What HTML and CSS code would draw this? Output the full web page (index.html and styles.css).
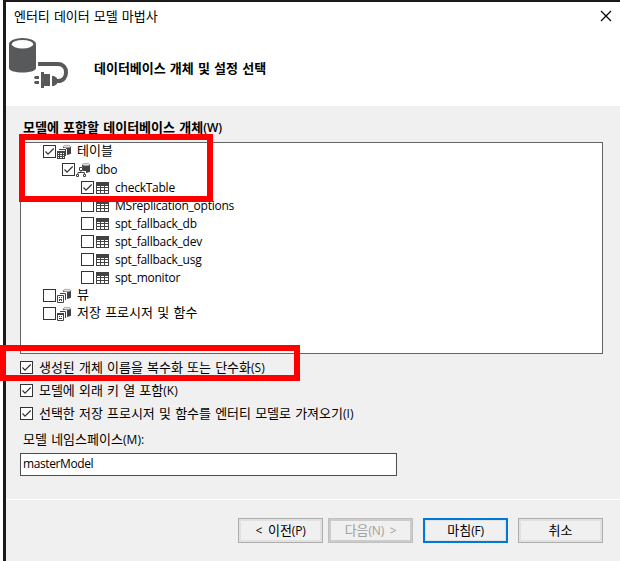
FILE: index.html
```html
<!DOCTYPE html>
<html lang="ko">
<head>
<meta charset="utf-8">
<title>엔터티 데이터 모델 마법사</title>
<link rel="stylesheet" href="styles.css">
</head>
<body>
<svg class="defs" width="0" height="0">
  <symbol id="check" viewBox="0 0 13 13"><rect x=".5" y=".5" width="12" height="12" fill="#fff" stroke="#333"/><path d="M2.500 6.500 5 9.200 10.700 3.500" fill="none" stroke="#333" stroke-width="1.2"/></symbol>
  <symbol id="box" viewBox="0 0 13 13"><rect x=".5" y=".5" width="12" height="12" fill="#fff" stroke="#333"/></symbol>
  <symbol id="table" viewBox="0 0 16 16"><path fill="#424242" d="M2 2h13v12H2z"/><path fill="#fff" d="M3 6h3v1H3zM7 6h3v1H7zM11 6h3v1h-3zM3 8h3v2H3zM7 8h3v2H7zM11 8h3v2h-3zM3 11h3v2H3zM7 11h3v2H7zM11 11h3v2h-3z"/></symbol>
  <symbol id="db" viewBox="0 0 16 16"><path fill="#424242" d="M7 2.500v7.300q4 2.200 8 0V2.500z"/><ellipse cx="11" cy="2.500" rx="3.800" ry="1.300" fill="#e0e0e0" stroke="#777" stroke-width=".5"/></symbol>
  <symbol id="tables" viewBox="0 0 16 16"><use href="#db"/><path fill="#fff" d="M0 4h10v1h1v9H9v1H0z"/><path fill="#424242" d="M3 5h7v7H9V6H3zM1 7h8v8H1z"/><path fill="#fff" d="M2 9h1v1H2zM4 9h2v1H4zM7 9h1v1H7zM2 11h1v1H2zM4 11h2v1H4zM7 11h1v1H7zM2 13h1v1H2zM4 13h2v1H4zM7 13h1v1H7z"/></symbol>
  <symbol id="schema" viewBox="0 0 16 16"><use href="#db"/><path fill="#fff" d="M3 5h5v4h3v6H1V9h2z"/><path d="M4.500 5.500h3v3h-3zM6 8.500V10M3 12v-1.500h6.500V12M1.500 12.500h2v2h-2zM8.500 12.500h2v2h-2z" fill="none" stroke="#424242"/></symbol>
  <symbol id="views" viewBox="0 0 16 16"><use href="#db"/><path fill="#fff" d="M0 4h11v8h-1v3H0z"/><path d="M4 5.500h5.500V12M1.500 7.500h6v7h-6z" fill="none" stroke="#424242"/><path fill="#424242" d="M3 9h1v1H3zM5 9h1v1H5zM3 11h3v1H3zM3 12h1v1H3zM5 12h1v1H5z"/></symbol>
  <symbol id="procs" viewBox="0 0 16 16"><use href="#db"/><path fill="#fff" d="M0 4h11v8h-1v3H0z"/><path d="M4 5.500h5.500V12M1.500 7.500h6v7h-6z" fill="none" stroke="#424242"/><path fill="#424242" d="M1 7h7v2H1zM3 10h1v1H3zM5 10h1v1H5zM3 12h3v1H3z"/></symbol>
</svg>
<div class="window">
  <header class="header">
    <div class="titlebar"><span>엔터티 데이터 모델 마법사</span><svg class="close" viewBox="0 0 12 12"><path d="M1 1l10 10M11 1 1 11" fill="none" stroke="#000" stroke-width="1.2"/></svg></div>
    <div class="banner">
      <svg class="logo" viewBox="0 0 66 56"><path fill="#58595b" d="M3 8v24c0 6 27 6 27 0V8z"/><ellipse cx="16.500" cy="8" rx="13.500" ry="6" fill="#58595b"/><ellipse cx="16.500" cy="8.300" rx="10.700" ry="4.200" fill="#fff"/><path d="M32 28h20c10.700 0 10.700 17 0 17h-3" fill="none" stroke="#58595b" stroke-width="4"/><path fill="#58595b" d="M46 40h2l3 2v6l-3 2h-2zM35 36h3v2h6v12h-6v2h-3zM29 40h4v3h-4l-1-1.500zM29 45h4v3h-4l-1-1.500z"/></svg>
      <h1>데이터베이스 개체 및 설정 선택</h1>
    </div>
  </header>
  <main class="content">
    <h2>모델에 포함할 데이터베이스 개체<span class="latin">(W)</span></h2>
    <div class="tree">
      <div class="row"><svg class="cb"><use href="#check"/></svg><svg class="icon"><use href="#tables"/></svg><span>테이블</span></div>
      <div class="row level1"><svg class="cb"><use href="#check"/></svg><svg class="icon"><use href="#schema"/></svg><span class="latin">dbo</span></div>
      <div class="row level2"><svg class="cb"><use href="#check"/></svg><svg class="icon"><use href="#table"/></svg><span class="latin">checkTable</span></div>
      <div class="row level2"><svg class="cb"><use href="#box"/></svg><svg class="icon"><use href="#table"/></svg><span class="latin">MSreplication_options</span></div>
      <div class="row level2"><svg class="cb"><use href="#box"/></svg><svg class="icon"><use href="#table"/></svg><span class="latin">spt_fallback_db</span></div>
      <div class="row level2"><svg class="cb"><use href="#box"/></svg><svg class="icon"><use href="#table"/></svg><span class="latin">spt_fallback_dev</span></div>
      <div class="row level2"><svg class="cb"><use href="#box"/></svg><svg class="icon"><use href="#table"/></svg><span class="latin">spt_fallback_usg</span></div>
      <div class="row level2"><svg class="cb"><use href="#box"/></svg><svg class="icon"><use href="#table"/></svg><span class="latin">spt_monitor</span></div>
      <div class="row"><svg class="cb"><use href="#box"/></svg><svg class="icon"><use href="#views"/></svg><span>뷰</span></div>
      <div class="row"><svg class="cb"><use href="#box"/></svg><svg class="icon"><use href="#procs"/></svg><span>저장 프로시저 및 함수</span></div>
    </div>
    <div class="options">
      <div class="option"><svg class="cb"><use href="#check"/></svg><span>생성된 개체 이름을 복수화 또는 단수화<span class="latin">(S)</span></span></div>
      <div class="option"><svg class="cb"><use href="#check"/></svg><span>모델에 외래 키 열 포함<span class="latin">(K)</span></span></div>
      <div class="option"><svg class="cb"><use href="#check"/></svg><span>선택한 저장 프로시저 및 함수를 엔터티 모델로 가져오기<span class="latin">(I)</span></span></div>
    </div>
    <div class="label">모델 네임스페이스<span class="latin">(M):</span></div>
    <div class="input latin">masterModel</div>
  </main>
  <footer class="footer">
    <div class="button"><span><span class="latin">&lt;&nbsp; </span>이전<span class="latin">(P)</span></span></div>
    <div class="button disabled"><span>다음<span class="latin">(N)&nbsp; &gt;</span></span></div>
    <div class="button primary"><span>마침<span class="latin">(F)</span></span></div>
    <div class="button cancel"><span>취소</span></div>
  </footer>
</div>
<div class="mark mark-tree"></div>
<div class="mark mark-option"></div>
</body>
</html>
```
FILE: styles.css
```css
* { box-sizing: border-box; }
body {
  margin: 0;
  width: 620px;
  height: 561px;
  padding-left: 3px;
  overflow: hidden;
  position: relative;
  background: #fff;
  color: #000;
  font: 13px/18px "Noto Sans CJK KR", sans-serif;
  word-spacing: 0.6px;
}
svg { display: block; flex: none; }
.defs { position: absolute; }
.latin { font-family: "Open Sans", "Noto Sans", sans-serif; font-size: 12px; word-spacing: 0; letter-spacing: -0.24px; }
.window {
  height: 561px;
  border-left: 3px solid #1b1a1b;
  border-top: 2px solid #1b191a;
  background: #f0f0f0;
  display: flex;
  flex-direction: column;
}
.header { height: 104px; background: #fff; }
.titlebar { height: 28px; padding: 0 8px; display: flex; align-items: center; justify-content: space-between; letter-spacing: -0.05px; }
.close { width: 12px; height: 12px; }
.banner { display: flex; align-items: center; height: 76px; }
.logo { width: 66px; height: 56px; margin-top: -8px; }
h1, h2 { margin: 0; font-size: 13px; line-height: 18px; font-weight: 700; }
h1 { margin: 0 0 0 22px; letter-spacing: -0.02px; }
.content { height: 393px; padding: 12px 17px 0 14px; }
h2 { padding-left: 3px; margin-bottom: 5px; }
h2 .latin { font-weight: 600; letter-spacing: 0; }
.tree { height: 212px; border: 1px solid #646464; background: #fff; padding-left: 22px; }
.row { display: flex; height: 18px; }
.row > span { margin-left: 5px; margin-top: -2px; white-space: nowrap; }
.row > .latin { margin-top: 0; }
.row .cb { margin-top: 2px; }
.row .icon { margin-top: 1px; }
.level1 { padding-left: 19px; }
.level2 { padding-left: 38px; }
.cb { width: 13px; height: 13px; }
.icon { width: 16px; height: 16px; }
.options { padding-top: 4px; }
.option { display: flex; gap: 6px; height: 23px; letter-spacing: -0.03px; }
.option .cb { margin-top: 3px; }
.option .latin, .label .latin { letter-spacing: 0.1px; }
.label { margin: 3px 0 0 3px; height: 23px; }
.input { width: 377px; height: 23px; border: 1px solid #4c4c52; background: #fff; padding: 1px 0 0 2px; letter-spacing: -0.4px; }
.footer { border-top: 1px solid #fff; flex: 1; display: flex; justify-content: flex-end; padding: 18px 17px 0 0; }
.button {
  width: 85px; height: 25px; margin-left: 5px;
  border: 1px solid #adadad; box-shadow: inset 0 0 0 2px #e1e1e1;
  display: flex; justify-content: center; align-items: center;
}
.button > span { margin-top: -1px; }
.disabled { color: #a0a0a0; border-color: #bfbfbf; box-shadow: inset 0 0 0 2px #ccc; }
.primary { margin-left: 10px; border: 2px solid #0078d7; box-shadow: inset 0 0 0 1px #e1e1e1; }
.cancel { margin-left: 10px; }
.mark { position: absolute; border: 6px solid #f00; }
.mark-tree { left: 19px; top: 134px; width: 194px; height: 68px; }
.mark-option { left: 0; top: 345px; width: 300px; height: 36px; }
```
